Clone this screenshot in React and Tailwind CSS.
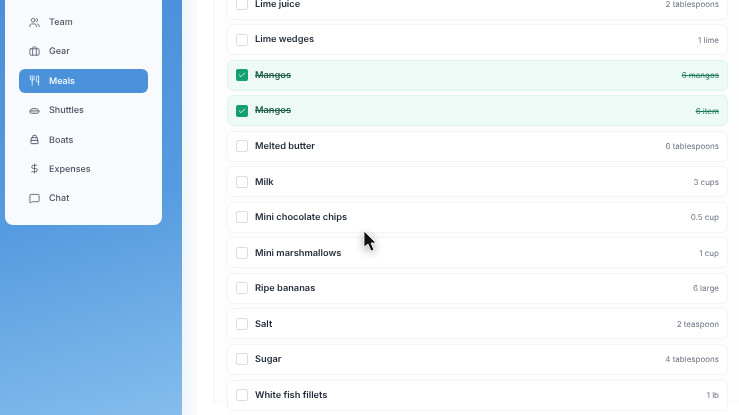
import React from 'react';
import { Users, Briefcase, Utensils, DollarSign, MessageSquare, Check } from 'lucide-react';

const ShuttleIcon = ({ className }) => (
  <svg className={className} viewBox="0 0 24 24" fill="none" stroke="currentColor" strokeWidth="2" strokeLinecap="round" strokeLinejoin="round">
    <path d="M5 18c-2 0-3-1-3-3 0-4 3-7 7-7h6c3 0 5 1.500 6.500 4.500 1 2.500-.5 5.500-3 5.500Z" />
    <path d="M2.500 13H21" />
  </svg>
);

const BoatIcon = ({ className }) => (
  <svg className={className} viewBox="0 0 24 24" fill="none" stroke="currentColor" strokeWidth="2" strokeLinecap="round" strokeLinejoin="round">
    <path d="M8 8V5a2 2 0 0 1 2-2h4a2 2 0 0 1 2 2v3" />
    <path d="M6 8h12l2 12a1 1 0 0 1-1 1H5a1 1 0 0 1-1-1Z" />
    <path d="M5 14h14" />
  </svg>
);

const navItems = [
  { label: 'Team', icon: Users },
  { label: 'Gear', icon: Briefcase },
  { label: 'Meals', icon: Utensils, active: true },
  { label: 'Shuttles', icon: ShuttleIcon },
  { label: 'Boats', icon: BoatIcon },
  { label: 'Expenses', icon: DollarSign },
  { label: 'Chat', icon: MessageSquare },
];

const items = [
  { name: 'Lime juice', qty: '2 tablespoons' },
  { name: 'Lime wedges', qty: '1 lime' },
  { name: 'Mangos', qty: '6 mangos', done: true },
  { name: 'Mangos', qty: '6 item', done: true },
  { name: 'Melted butter', qty: '6 tablespoons' },
  { name: 'Milk', qty: '3 cups' },
  { name: 'Mini chocolate chips', qty: '0.5 cup' },
  { name: 'Mini marshmallows', qty: '1 cup' },
  { name: 'Ripe bananas', qty: '6 large' },
  { name: 'Salt', qty: '2 teaspoon' },
  { name: 'Sugar', qty: '4 tablespoons' },
  { name: 'White fish fillets', qty: '1 lb' },
];

const NavItem = ({ label, icon: Icon, active }) => (
  <div className={`flex items-center h-[24px] mx-[14px] pl-[9.500px] gap-[9.500px] rounded-[6px] text-[9px] font-medium ${
    active ? 'bg-[#4b92da] text-white' : 'text-[#4b5563]'
  }`}>
    <Icon className={`w-[11px] h-[11px] shrink-0 ${active ? 'text-white' : 'text-[#4b5563]'}`} strokeWidth={1.75} />
    <span className="pt-[1.500px]">{label}</span>
  </div>
);

const Row = ({ name, qty, done }) => (
  <div className={`flex items-center justify-between h-[31px] shrink-0 pl-[8px] pr-[8px] rounded-[6px] border ${
    done ? 'bg-[#eefaf6] border-[#dff4ec]' : 'bg-white border-[#f3f4f6]'
  }`}>
    <div className="flex items-center gap-[7px]">
      {done ? (
        <span className="w-[12px] h-[12px] rounded-[2px] bg-[#14a06f] flex items-center justify-center">
          <Check className="w-[8px] h-[8px] text-white" strokeWidth={2.5} />
        </span>
      ) : (
        <span className="w-[12px] h-[12px] rounded-[2px] border border-[#dcdee1] bg-white" />
      )}
      <span className={`pt-[1.500px] text-[9.250px] font-semibold ${done ? 'text-[#1f5f4a] line-through' : 'text-[#1f2937]'}`}>{name}</span>
    </div>
    <span className={`text-[8px] ${done ? 'text-[#1f7a5c] line-through' : 'text-[#6b7280]'}`}>{qty}</span>
  </div>
);

export default function App() {
  return (
    <div className="relative flex h-[415px] w-[739px] overflow-hidden font-['Inter',sans-serif] [text-rendering:geometricPrecision] blur-[0.6px]">
      <aside className="w-[182px] shrink-0 bg-[linear-gradient(165deg,#4a90d9_0%,#559be0_50%,#85bdec_100%)] pl-[5px] pr-[20px]">
        <nav className="w-[157px] h-[225px] bg-[#f8fafd] rounded-b-[8px] pt-[10px] flex flex-col gap-[5.400px]">
          {navItems.map((item) => (
            <NavItem key={item.label} {...item} />
          ))}
        </nav>
      </aside>

      <div className="w-[15px] shrink-0 bg-gradient-to-r from-[#f0f6fc] to-[#f8fbfe]" />

      <main className="flex-1 bg-white pl-[16px] overflow-hidden">
        <div className="h-full bg-[#fdfdfe] border-l border-[#f4f5f7] pl-[13px] pr-[11px]">
          <div className="flex flex-col gap-[4.550px] mt-[-11.500px]">
            {items.map((item, i) => (
              <Row key={i} {...item} />
            ))}
          </div>
        </div>
      </main>

      {/* cursor */}
      <svg className="absolute left-[362px] top-[230px] w-[16px] h-[24px] drop-shadow-[0_2px_4px_rgba(0,0,0,0.35)]" viewBox="0 0 16 24">
        <path d="M2 1 L2 17 L6 14 L9 21 L12 20 L9 13 L14 13 Z" fill="#111" stroke="#fff" strokeWidth="0.8" />
      </svg>
    </div>
  );
}
